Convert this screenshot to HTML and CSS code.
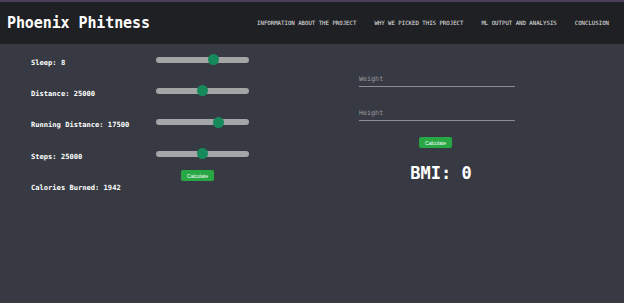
FILE: index.html
```html
<!DOCTYPE html>
<html lang="en">
<head>
  <meta charset="UTF-8">
  <meta name="viewport" content="width=device-width, initial-scale=1.0">
  <title>Phoenix Phitness</title>
  <link rel="stylesheet" href="styles.css">
</head>
<body>
  <header class="topbar">
    <h1 class="logo">Phoenix Phitness</h1>
    <nav class="nav">
      <a href="#info">INFORMATION ABOUT THE PROJECT</a>
      <a href="#why">WHY WE PICKED THIS PROJECT</a>
      <a href="#ml">ML OUTPUT AND ANALYSIS</a>
      <a href="#conclusion">CONCLUSION</a>
    </nav>
  </header>

  <main class="content">
    <!-- Calories calculator -->
    <section class="calories">
      <label class="field-label">Sleep: 8</label>
      <input class="slider" type="range" min="1" max="12" value="8">

      <label class="field-label">Distance: 25000</label>
      <input class="slider" type="range" min="0" max="50000" value="25000">

      <label class="field-label">Running Distance: 17500</label>
      <input class="slider" type="range" min="0" max="25000" value="17500">

      <label class="field-label">Steps: 25000</label>
      <input class="slider" type="range" min="0" max="50000" value="25000">

      <p class="field-label">Calories Burned: 1942</p>
      <button class="btn btn-left">Calculate</button>
    </section>

    <!-- BMI calculator -->
    <section class="bmi">
      <input class="text-input" type="text" placeholder="Weight">
      <input class="text-input" type="text" placeholder="Height">
      <button class="btn">Calculate</button>
      <h2 class="bmi-result">BMI: 0</h2>
    </section>
  </main>
</body>
</html>
```

FILE: styles.css
```css
* {
  margin: 0;
  padding: 0;
  box-sizing: border-box;
}

body {
  background-color: #373a42;
  color: #fff;
  font-family: "DejaVu Sans Mono", "Liberation Mono", monospace;
  border-top: 2px solid #4b3c5c;
  min-height: 100vh;
}

.topbar {
  height: 42px;
  background-color: #1f2023;
  display: flex;
  align-items: center;
  justify-content: space-between;
  padding: 0 15px 0 7px;
}

.logo {
  font-size: 15px;
  font-weight: bold;
  letter-spacing: -0.1px;
}

.nav {
  display: flex;
  gap: 18px;
}

.nav a {
  color: #e6e6e6;
  text-decoration: none;
  font-size: 5.7px;
}

.content {
  display: flex;
  padding: 0 0 0 31px;
}

.calories {
  display: grid;
  grid-template-columns: 125px 93px;
  grid-auto-rows: 31.3px;
  align-items: center;
  width: 328px;
}

.field-label {
  font-size: 7.1px;
  font-weight: bold;
  padding-top: 5px;
}

.slider {
  -webkit-appearance: none;
  appearance: none;
  width: 93px;
  height: 10px;
  background: transparent;
}

.slider::-webkit-slider-runnable-track {
  height: 6px;
  border-radius: 3px;
  background-color: #a4a5a7;
}

.slider::-webkit-slider-thumb {
  -webkit-appearance: none;
  width: 11px;
  height: 11px;
  border-radius: 50%;
  background-color: #178a5b;
  margin-top: -2.5px;
  border: none;
}

.btn {
  background-color: #28a745;
  color: #fff;
  border: none;
  border-radius: 2px;
  font-family: "Liberation Sans", Arial, sans-serif;
  font-size: 5px;
  width: 33px;
  height: 11px;
}

.btn-left {
  align-self: start;
  margin: 1px 0 0 25px;
}

.bmi {
  display: flex;
  flex-direction: column;
  align-items: center;
  width: 156px;
  padding-top: 28px;
}

.text-input {
  width: 156px;
  height: 15px;
  background: transparent;
  border: none;
  border-bottom: 1px solid #8b8e94;
  color: #fff;
  font-family: "DejaVu Sans Mono", monospace;
  font-size: 6.7px;
  margin-bottom: 19px;
}

.text-input::placeholder {
  color: #9a9ca1;
}

.bmi .btn {
  margin: -3px 0 0 -3px;
}

.bmi-result {
  font-size: 17px;
  font-weight: bold;
  margin-top: 15px;
  padding-left: 8px;
}
```
